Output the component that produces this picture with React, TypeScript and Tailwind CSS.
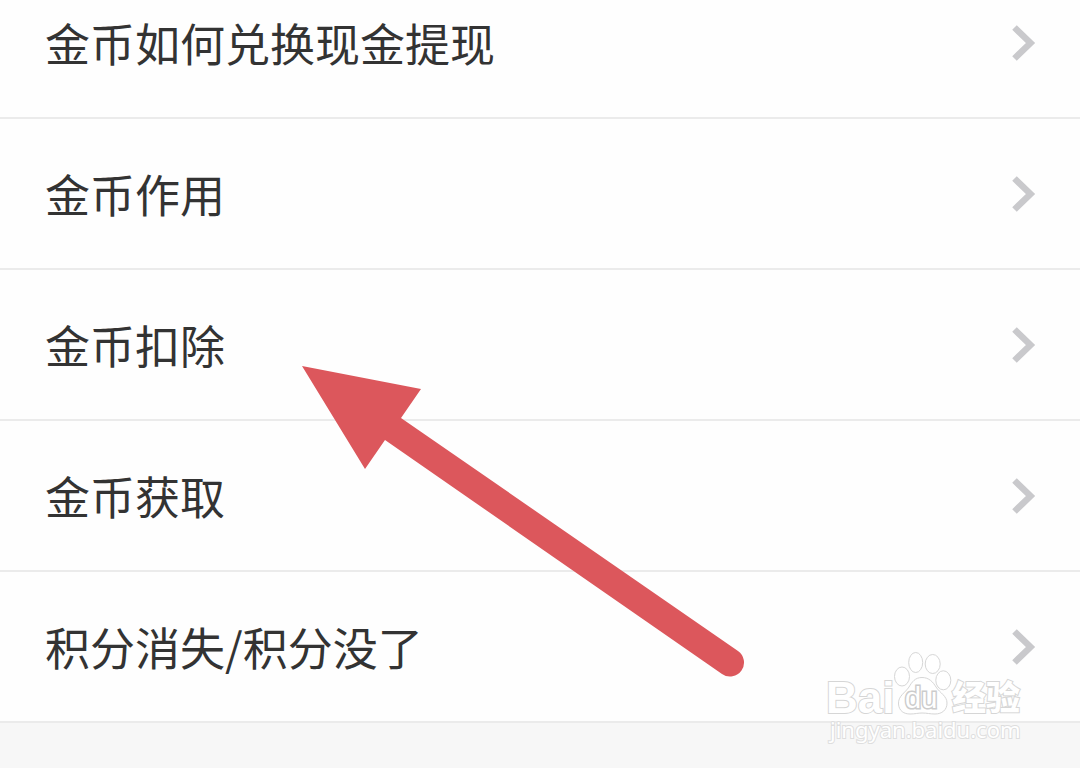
const topics = [
  "金币如何兑换现金提现",
  "金币作用",
  "金币扣除",
  "金币获取",
  "积分消失/积分没了",
];

const Chevron = () => (
  <svg
    className="h-9 w-6 shrink-0"
    viewBox="0 0 24 36"
    fill="none"
    stroke="#c9c9cc"
    strokeWidth="6.5"
    aria-hidden="true"
  >
    <path d="M2.5 2.5 L18.5 18 L2.5 33.5" />
  </svg>
);

const TopicRow = ({ title }: { title: string }) => (
  <li className="border-b-2 border-[#ebebeb]">
    <a
      href="#"
      className="flex h-[149px] items-center justify-between pl-[45px] pr-11 pt-px"
    >
      <span className="text-[45px] leading-[60px] text-[#333333]">{title}</span>
      <Chevron />
    </a>
  </li>
);

const Arrow = () => (
  <svg
    className="pointer-events-none absolute left-[300px] top-[364px] h-[316px] w-[448px]"
    viewBox="300 364 448 316"
    aria-hidden="true"
  >
    <path
      fill="#dc575c"
      d="M302 366 L421 389 L401 418 L738 651 A14 14 0 0 1 722 674 L385 440 L365 469 Z"
    />
  </svg>
);

const Watermark = () => (
  <svg
    className="pointer-events-none absolute right-[54px] top-[648px] h-[104px] w-[202px]"
    viewBox="824 648 202 104"
    fill="#ffffff"
    stroke="#d6d6d6"
    strokeWidth="1"
    role="img"
    aria-label="Baidu 经验"
  >
    <text
      x="826"
      y="713"
      fontSize="44"
      fontWeight="700"
      fontFamily="Liberation Sans, sans-serif"
      strokeWidth="2"
      paintOrder="stroke"
    >
      Bai
    </text>
    <ellipse cx="902" cy="676.5" rx="7.5" ry="9.5" />
    <ellipse cx="915.7" cy="662.5" rx="7" ry="10" />
    <ellipse cx="932.7" cy="664" rx="7.5" ry="9.5" />
    <ellipse cx="943.3" cy="680.3" rx="7.5" ry="9.5" />
    <path d="M922 677.5 C915 677.5 912 682 909 687 C905 693 898 696 898.5 704 C899 711 904 714 910 714 C915 714 918 713 922 713 C927 713 930 714 935 714 C942 714 947 710 947 703 C947 696 940 693 936 687 C933 682 929 677.5 922 677.5 Z" />
    <text
      x="905"
      y="708"
      fontSize="29"
      fontFamily="Liberation Sans, sans-serif"
      stroke="#cccccc"
      strokeWidth="3"
      paintOrder="stroke"
    >
      du
    </text>
    <text
      x="952"
      y="710"
      fontSize="34"
      fontWeight="900"
      fontFamily="Noto Sans CJK SC, sans-serif"
      strokeWidth="2"
      paintOrder="stroke"
    >
      经验
    </text>
    <text
      x="830"
      y="738"
      fontSize="22"
      fontFamily="Noto Sans, sans-serif"
      stroke="#dedede"
      strokeWidth="2"
      paintOrder="stroke"
    >
      jingyan.baidu.com
    </text>
  </svg>
);

export default function App() {
  return (
    <main
      lang="zh-CN"
      className="relative min-h-screen overflow-hidden bg-[#f7f7f7] font-['Noto_Sans_CJK_SC',sans-serif]"
    >
      <ul className="-mt-8 bg-[#fefefe]">
        {topics.map((title) => (
          <TopicRow key={title} title={title} />
        ))}
      </ul>
      <Arrow />
      <Watermark />
    </main>
  );
}
